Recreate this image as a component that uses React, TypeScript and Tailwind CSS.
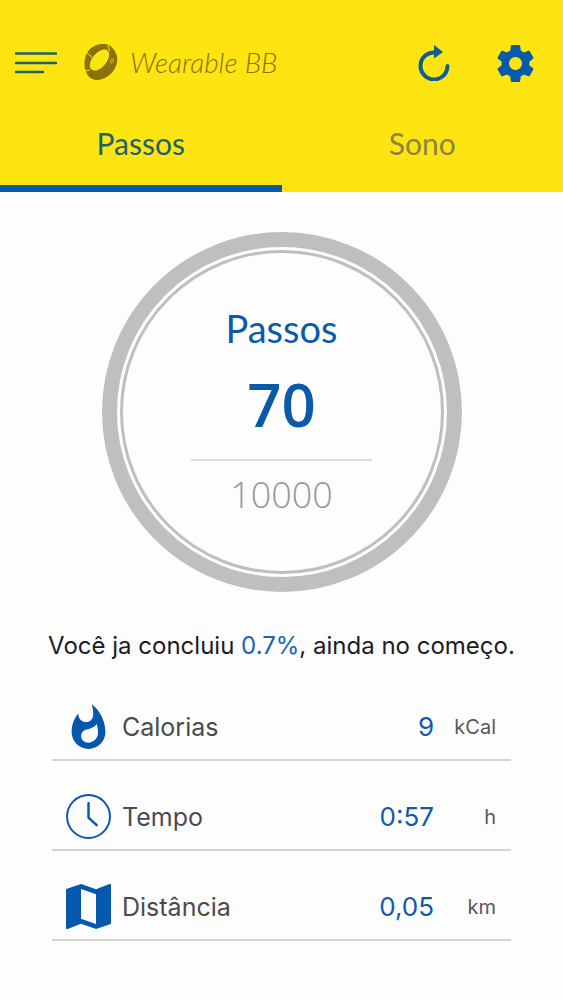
import { useState } from "react";

const stats = [
  {
    icon: (
      <svg className="size-[45px] fill-[#0558ae]" viewBox="1.33 0.67 21.33 21.33" aria-hidden>
        <path d="M13.5.67s.74 2.65.74 4.8c0 2.06-1.35 3.73-3.41 3.73-2.07 0-3.63-1.67-3.63-3.73l.03-.36C5.21 7.51 4 10.62 4 14c0 4.42 3.58 8 8 8s8-3.58 8-8C20 8.61 17.41 3.8 13.5.67zM11.71 19c-1.78 0-3.22-1.4-3.22-3.14 0-1.62 1.05-2.76 2.81-3.12 1.77-.36 3.6-1.21 4.62-2.58.39 1.29.59 2.65.59 4.04 0 2.65-2.15 4.8-4.8 4.8z" />
      </svg>
    ),
    label: "Calorias",
    value: "9",
    unit: "kCal",
  },
  {
    icon: (
      <svg className="size-[45px] stroke-[#0558ae]" viewBox="0 0 44 44" fill="none" aria-hidden>
        <circle cx="22" cy="22" r="21" strokeWidth="1.9" />
        <path d="M22 9v14l8 7.500" strokeWidth="2.4" strokeLinecap="round" strokeLinejoin="round" />
      </svg>
    ),
    label: "Tempo",
    value: "0:57",
    unit: "h",
  },
  {
    icon: (
      <svg className="size-[45px] fill-[#0558ae]" viewBox="3 3 18 18" aria-hidden>
        <path d="M20.5 3l-.16.03L15 5.1 9 3 3.36 4.9c-.21.07-.36.25-.36.48V20.5c0 .28.22.5.5.5l.16-.03L9 18.9l6 2.1 5.64-1.9c.21-.07.36-.25.36-.48V3.5c0-.28-.22-.5-.5-.5zM15 19l-6-2.11V5l6 2.11V19z" />
      </svg>
    ),
    label: "Distância",
    value: "0,05",
    unit: "km",
  },
];

const tabs = ["Passos", "Sono"];

function BraceletLogo() {
  return (
    <svg className="h-9 w-[34px]" viewBox="0 0 34 36" fill="none" aria-hidden>
      <path
        fill="#8a7209"
        d="M17 0C20 -.5 24 0 27 2.500C31 6 34 11 33 18C32 26 25 34 15 36C8 36.500 3 33 1 25C-.5 18 1 11 5 6C8 2.500 12 .5 17 0Z"
      />
      <ellipse cx="15.500" cy="16" rx="12.500" ry="7" transform="rotate(-50 15.500 16)" fill="#fde60f" />
      <path d="M2.500 8.500l6 5M24 1l1.500 6M1 27l5-1" stroke="#fde60f" strokeWidth="1" />
      <ellipse cx="28" cy="17" rx="1.300" ry="2.200" transform="rotate(25 28 17)" stroke="#e3cb0e" strokeWidth=".8" />
    </svg>
  );
}

function Header() {
  return (
    <div className="flex h-[124px] items-center pr-[29px] pl-[15px]">
      <button type="button" aria-label="Menu">
        <svg className="h-6 w-[42px] stroke-[#1c6369]" viewBox="0 0 42 24" strokeWidth="2.6" strokeLinecap="round" aria-hidden>
          <path d="M1 3.500h40M1 13h40M1 22h27" />
        </svg>
      </button>
      <h1 className="ml-[27px] flex items-center gap-3 font-['Lato',sans-serif] text-[28px] leading-9 font-light text-[#8a7209] italic">
        <BraceletLogo />
        Wearable BB
      </h1>
      <div className="ml-auto flex items-center gap-[47px] pt-0.5">
        <button type="button" aria-label="Atualizar">
          <svg className="h-9 w-8" viewBox="0 0 32 36" fill="none" aria-hidden>
            <path d="M29.500 21A13.500 13.500 0 1 1 17 7.500" stroke="#125c90" strokeWidth="4" strokeLinecap="round" />
            <path d="M16 0l9 7-9 6.500z" fill="#125c90" />
          </svg>
        </button>
        <button type="button" aria-label="Configurações">
          <svg className="size-[37px] fill-[#075ba8]" viewBox="2 2 20 20" aria-hidden>
            <path d="M19.430 12.980c.04-.32.07-.64.07-.98s-.03-.66-.07-.98l2.110-1.650c.19-.15.24-.42.12-.64l-2-3.460c-.12-.22-.39-.3-.61-.22l-2.490 1c-.52-.4-1.080-.73-1.690-.98l-.38-2.650C14.460 2.180 14.250 2 14 2h-4c-.25 0-.46.18-.49.42l-.38 2.650c-.61.25-1.170.59-1.690.98l-2.490-1c-.23-.09-.49 0-.61.22l-2 3.460c-.13.22-.07.49.12.64l2.110 1.650c-.04.32-.07.65-.07.98s.03.66.07.98l-2.110 1.650c-.19.15-.24.42-.12.64l2 3.460c.12.22.39.3.61.22l2.490-1c.52.4 1.080.73 1.690.98l.38 2.650c.03.24.24.42.49.42h4c.25 0 .46-.18.49-.42l.38-2.650c.61-.25 1.170-.59 1.690-.98l2.490 1c.23.09.49 0 .61-.22l2-3.460c.12-.22.07-.49-.12-.64l-2.110-1.650zM12 15.500c-1.930 0-3.500-1.570-3.500-3.500s1.570-3.500 3.500-3.500 3.500 1.570 3.500 3.500-1.570 3.500-3.500 3.500z" />
          </svg>
        </button>
      </div>
    </div>
  );
}

function Gauge() {
  return (
    <section className="mx-auto mt-10 size-[360px] rounded-full border-[15px] border-[#bfbfc1] p-[3px]">
      <div className="flex h-full flex-col items-center rounded-full border-[3px] border-[#bfbfc1] pt-[53px] font-['Lato',sans-serif]">
        <h2 className="text-[38px] leading-[44px] text-[#0b59a9]">Passos</h2>
        <div className="mt-[18px] font-['Open_Sans',sans-serif] text-[60px] leading-[72px] font-semibold text-[#0b59a9]">70</div>
        <div className="mt-[19px] w-[181px] border-t-2 border-[#dcdcde] pt-3 text-center font-['Open_Sans',sans-serif] text-4xl leading-[44px] font-light text-[#98989a]">
          10000
        </div>
      </div>
    </section>
  );
}

export default function App() {
  const [active, setActive] = useState("Passos");

  return (
    <div className="min-h-screen bg-[#fdfdfe] font-['Inter',sans-serif]">
      <header className="bg-[#fee512]">
        <Header />
        <nav className="grid grid-cols-2" role="tablist">
          {tabs.map((tab) => (
            <button
              key={tab}
              type="button"
              role="tab"
              aria-selected={active === tab}
              onClick={() => setActive(tab)}
              className={`h-[68px] border-b-[7px] pb-6 font-['Lato',sans-serif] text-[30px] leading-9 ${
                active === tab ? "border-[#0a5aab] text-[#1c6369]" : "border-transparent text-[#8f8344]"
              }`}
            >
              {tab}
            </button>
          ))}
        </nav>
      </header>

      <main>
        <Gauge />
        <p className="mt-9 text-center text-2xl leading-9 text-[#1c1c1f]">
          Você ja concluiu <span className="text-[#1d62b5]">0.7%</span>, ainda no começo.
        </p>
        <dl className="mx-[52px] mt-[7px]">
          {stats.map((s) => (
            <div key={s.label} className="flex h-[90px] items-end border-b-2 border-[#d3d3d6] pr-[15px] pb-[10px] pl-[14px]">
              {s.icon}
              <dt className="ml-[11px] text-[25px] leading-[44px] text-[#4b4b4d]">{s.label}</dt>
              <dd className="ml-auto flex leading-[44px]">
                <span className="text-[26px] text-[#1259ab]">{s.value}</span>
                <span className="w-[62px] text-right text-[20px] text-[#58585a]">{s.unit}</span>
              </dd>
            </div>
          ))}
        </dl>
      </main>
    </div>
  );
}
